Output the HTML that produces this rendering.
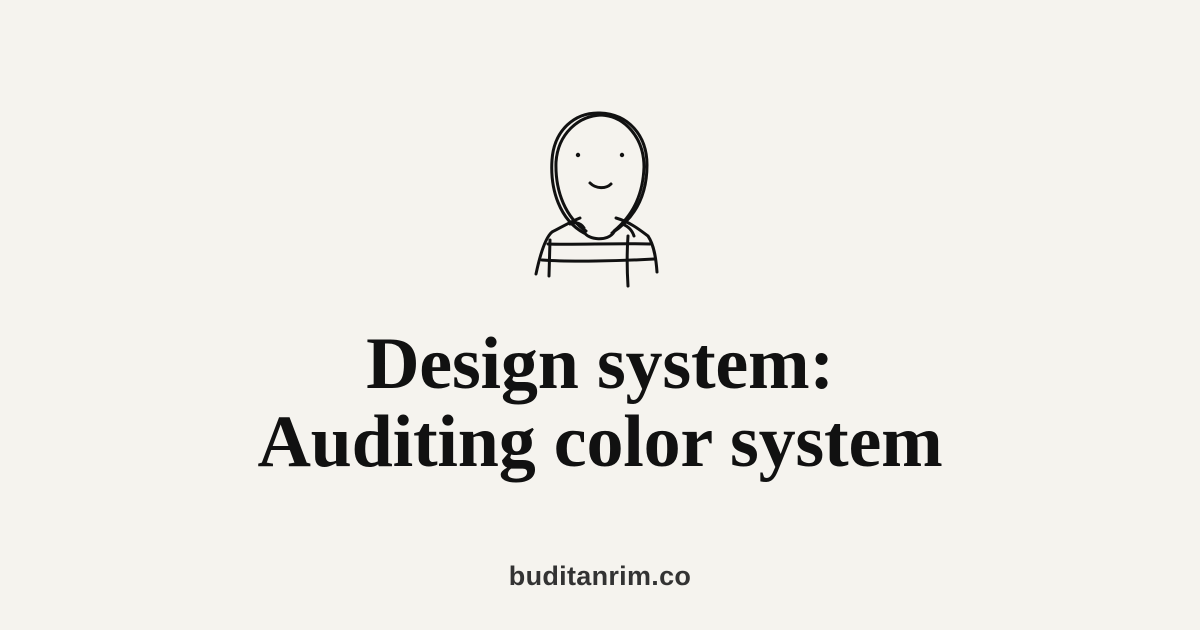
<!DOCTYPE html>
<html><head><style>
html,body{margin:0;padding:0;}
body{width:1200px;height:630px;background:#f5f3ee;position:relative;overflow:hidden;}
.t{position:absolute;left:0;width:1200px;text-align:center;font-family:"Liberation Serif",serif;font-weight:bold;font-size:74px;color:#111;line-height:78px;top:325px;letter-spacing:-0.2px}
.f{position:absolute;left:0;width:1200px;text-align:center;top:561px;font-family:"Liberation Sans",sans-serif;font-weight:bold;font-size:27px;color:#333;letter-spacing:0.3px}
svg{position:absolute;left:0;top:0}
</style></head><body>
<svg width="1200" height="630" fill="none" stroke="#111" stroke-width="3" stroke-linecap="round" stroke-linejoin="round">
<path d="M584 233 C560 220 550 190 552 160 C554 130 575 112 600 113 C628 114 647 135 647 165 C647 195 635 218 612 233"/>
<path d="M586 231 C566 218 555 192 556 162 C558 134 578 116 601 115 C625 116 644 138 644 167 C643 196 632 216 614 231"/>
<circle cx="578" cy="155" r="2.2" fill="#111" stroke="none"/>
<circle cx="622" cy="155" r="2.2" fill="#111" stroke="none"/>
<path d="M590 183 C596 189 606 189 611 184"/>
<path d="M584 232 C588 240 608 242 614 232"/>
<path d="M580 218 C570 222 560 228 552 232 C545 238 540 255 536 274"/>
<path d="M616 218 C630 222 640 230 648 236 C654 245 656 258 657 272"/>
<path d="M548 244 C570 245 620 243 650 244"/>
<path d="M542 260 C570 262 620 261 654 259"/>
<path d="M550 240 L549 276"/>
<path d="M628 236 C627 250 627 270 628 286"/>
<path d="M570 224 C574 222 580 222 584 228"/>
<path d="M622 224 C628 226 632 230 634 236"/>
</svg>
<div class="t">Design system:<br>Auditing color system</div>
<div class="f">buditanrim.co</div>
</body></html>
